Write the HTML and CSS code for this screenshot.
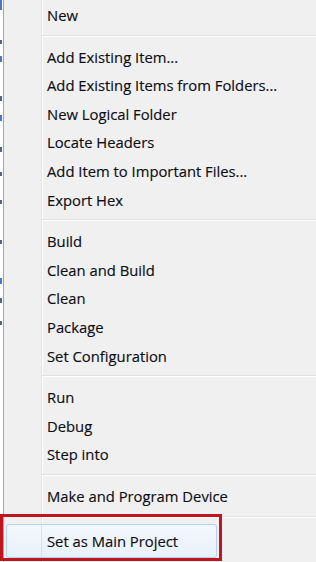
FILE: index.html
```html
<!DOCTYPE html>
<html>
<head>
<meta charset="utf-8">
<link rel="stylesheet" href="styles.css">
</head>
<body>
<div class="screen">
  <div class="under">
    <span class="bit blue" style="height:10px"></span>
    <span class="gap" style="height:30px"></span>
    <span class="bit dark" style="height:4px"></span>
    <span class="gap" style="height:12px"></span>
    <span class="bit blue" style="height:6px"></span>
    <span class="gap" style="height:34px"></span>
    <span class="bit dark" style="height:5px"></span>
    <span class="gap" style="height:14px"></span>
    <span class="bit blue" style="height:6px"></span>
    <span class="gap" style="height:26px"></span>
    <span class="bit dark" style="height:5px"></span>
    <span class="gap" style="height:20px"></span>
    <span class="bit dark" style="height:4px"></span>
    <span class="gap" style="height:24px"></span>
    <span class="bit dark" style="height:4px"></span>
    <span class="gap" style="height:36px"></span>
    <span class="bit dark" style="height:4px"></span>
    <span class="gap" style="height:34px"></span>
    <span class="bit blue" style="height:6px"></span>
    <span class="gap" style="height:14px"></span>
    <span class="bit dark" style="height:5px"></span>
    <span class="gap" style="height:18px"></span>
    <span class="bit dark" style="height:4px"></span>
  </div>
  <div class="menu">
    <div class="item">New</div>
    <div class="sep"></div>
    <div class="item">Add Existing Item...</div>
    <div class="item">Add Existing Items from Folders...</div>
    <div class="item">New Logical Folder</div>
    <div class="item">Locate Headers</div>
    <div class="item">Add Item to Important Files...</div>
    <div class="item">Export Hex</div>
    <div class="sep"></div>
    <div class="item">Build</div>
    <div class="item">Clean and Build</div>
    <div class="item">Clean</div>
    <div class="item">Package</div>
    <div class="item">Set Configuration</div>
    <div class="sep"></div>
    <div class="item">Run</div>
    <div class="item">Debug</div>
    <div class="item">Step into</div>
    <div class="sep"></div>
    <div class="item">Make and Program Device</div>
    <div class="sep"></div>
    <div class="item hot"><span class="hl">Set as Main Project</span></div>
  </div>
  <div class="annot"></div>
</div>
</body>
</html>
```
FILE: styles.css
```css
html, body {
  margin: 0;
  padding: 0;
  width: 316px;
  height: 562px;
  overflow: hidden;
  background: #f0f0f0;
}

.screen {
  position: relative;
  display: flex;
  width: 316px;
  height: 562px;
  font-family: "Open Sans", "Noto Sans", "DejaVu Sans", sans-serif;
  font-size: 14.8px;
  color: #0c0c14;
  -webkit-text-stroke: 0.15px #0c0c14;
}

.under {
  width: 3px;
  flex: none;
  background: #ffffff;
  border-right: 1px solid #a6a6a6;
  display: flex;
  flex-direction: column;
}

.bit { display: block; width: 2px; }
.gap { display: block; }
.blue { background: #4a78c8; }
.dark { background: #5a6470; }

.menu {
  flex: 1;
  display: flex;
  flex-direction: column;
  padding-top: 1px;
  background:
    linear-gradient(to right,
      transparent 37px,
      #e2e3e3 37px, #e2e3e3 38px,
      #ffffff 38px, #ffffff 39px,
      transparent 39px),
    #f0f0f0;
}

.item {
  height: 28.6px;
  line-height: 28.6px;
  padding-left: 43px;
  white-space: nowrap;
  flex: none;
}

.sep {
  height: 13px;
  flex: none;
  margin-left: 38px;
  background:
    linear-gradient(to bottom,
      transparent 5px,
      #e0e0e0 5px, #e0e0e0 6px,
      #ffffff 6px, #ffffff 7px,
      transparent 7px);
}

.item.hot {
  padding-left: 2px;
  height: 34px;
  line-height: normal;
}

.hl {
  display: flex;
  align-items: center;
  box-sizing: border-box;
  width: 211px;
  height: 34px;
  padding-left: 40px;
  border: 1px solid #b4d0f2;
  border-radius: 3px;
  background:
    linear-gradient(to right,
      transparent 34px,
      rgba(200, 215, 235, 0.6) 34px, rgba(200, 215, 235, 0.6) 35px,
      transparent 35px),
    linear-gradient(to bottom, #f4f8fd, #e8f0fa);
}

.annot {
  position: absolute;
  left: 0;
  top: 514px;
  width: 222px;
  height: 47px;
  box-sizing: border-box;
  border: 3px solid #bf1520;
}
```
